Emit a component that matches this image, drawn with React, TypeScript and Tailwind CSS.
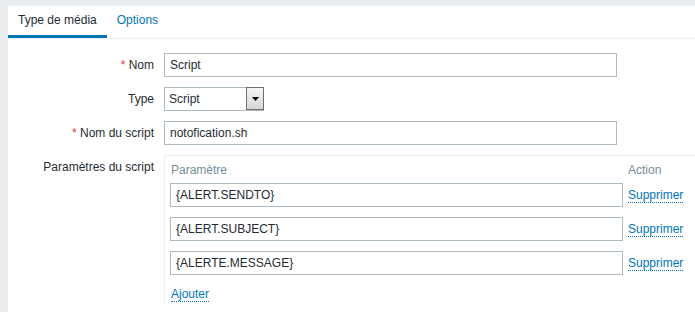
import React from "react";

const inputCls =
  "h-[24px] w-[453px] border border-[#acbbc2] bg-white px-[5px] text-[12px] leading-[22px] text-[#1f2c33]";

function Field({ label, required, children }: { label: string; required?: boolean; children: React.ReactNode }) {
  return (
    <div className="flex">
      <div className="w-[156px] shrink-0 pr-[10px] text-right leading-[24px]">
        {required && <span className="text-[#e33734]">* </span>}
        {label}
      </div>
      {children}
    </div>
  );
}

const params = ["{ALERT.SENDTO}", "{ALERT.SUBJECT}", "{ALERTE.MESSAGE}"];

export default function App() {
  return (
    <div className="h-[312px] w-[695px] overflow-hidden bg-[#ebeef0] pl-[8px] pt-[6px] font-['Liberation_Sans',Arial,sans-serif] text-[12px] text-[#1f2c33]">
      <div className="h-full bg-white">
        {/* Tabs */}
        <div className="flex border-b border-[#ebeef0]">
          <div className="border-b-[3px] border-[#0275b8] px-[10px] pb-[7px] pt-[6px] leading-[16px]">Type de média</div>
          <div className="border-b-[3px] border-transparent px-[10px] pb-[7px] pt-[6px] leading-[16px] text-[#0275b8]">Options</div>
        </div>

        {/* Form */}
        <div className="flex flex-col gap-[10px] pt-[14px]">
          <Field label="Nom" required>
            <div className={inputCls}>Script</div>
          </Field>
          <Field label="Type">
            <div className="flex h-[24px] w-[100px] border border-[#acbbc2] bg-white">
              <div className="flex-1 pl-[4px] leading-[22px]">Script</div>
              <div className="-mr-px -mt-px flex h-[23px] w-[18px] items-center justify-center border border-[#6f6f6f] bg-gradient-to-b from-[#f5f5f5] to-[#d6d6d6]">
                <svg width="7" height="4" viewBox="0 0 7 4">
                  <path d="M0 0h7L3.5 4z" fill="#000" />
                </svg>
              </div>
            </div>
          </Field>
          <Field label="Nom du script" required>
            <div className={inputCls}>notofication.sh</div>
          </Field>

          <div className="flex">
            <div className="w-[156px] shrink-0 pr-[10px] pt-[4px] text-right leading-[16px]">Paramètres du script</div>
            <div className="flex-1 border-l border-t border-[#ebeef0] px-[5px] pt-[6px]">
              <div className="flex leading-[16px] text-[#768d99]">
                <div className="w-[458px] pl-px">Paramètre</div>
                <div>Action</div>
              </div>
              <div className="mt-[5px] flex flex-col gap-[10px]">
                {params.map((p) => (
                  <div key={p} className="flex items-center gap-[5px]">
                    <div className={inputCls}>{p}</div>
                    <span className="border-b border-dotted border-[#0275b8] leading-[14px] text-[#0275b8]">Supprimer</span>
                  </div>
                ))}
              </div>
              <div className="mt-[10px] pl-px">
                <span className="border-b border-dotted border-[#0275b8] leading-[16px] text-[#0275b8]">Ajouter</span>
              </div>
            </div>
          </div>
        </div>
      </div>
    </div>
  );
}
